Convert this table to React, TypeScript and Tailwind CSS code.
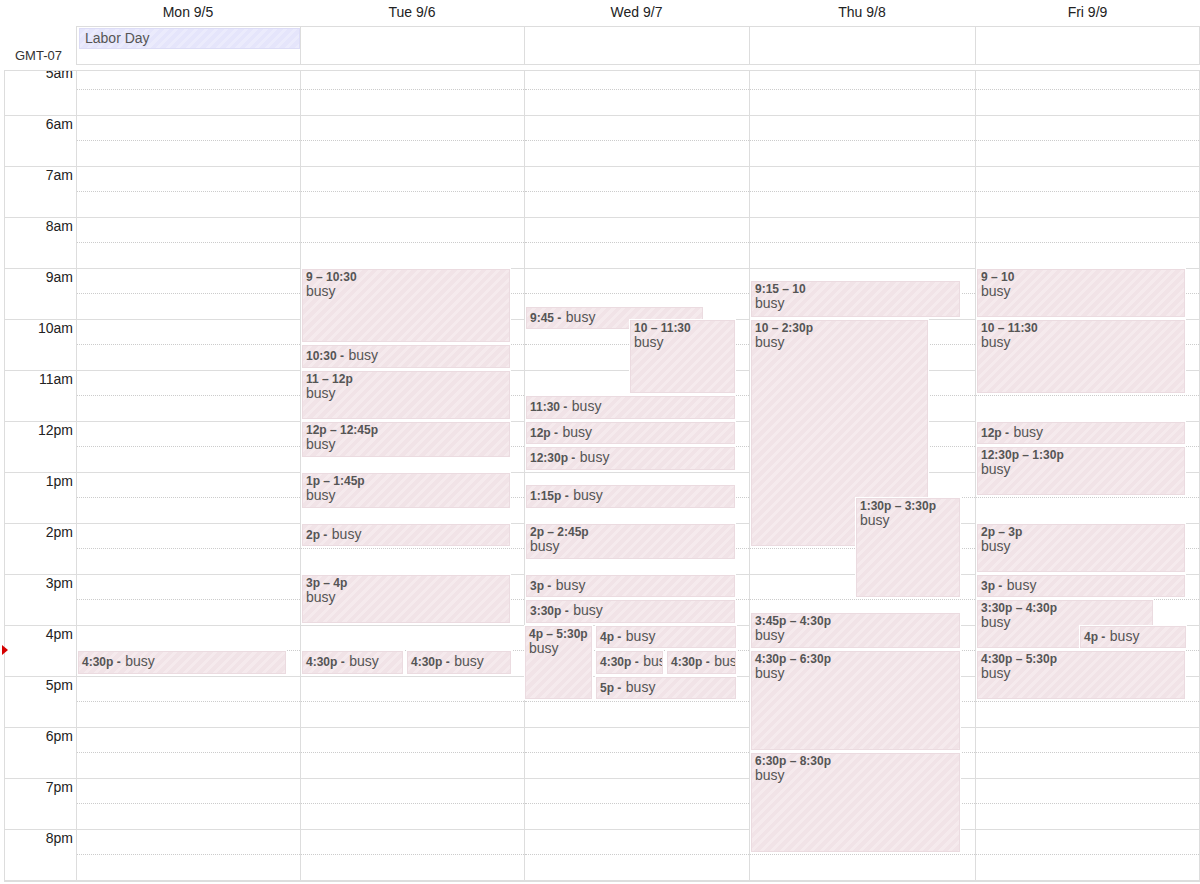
import React from "react";

type Ev = { s: number; e: number; x0: number; x1: number; time: string; inline?: boolean };

const HOUR = 51;
const FIRST = 5;
const hours = ["5am", "6am", "7am", "8am", "9am", "10am", "11am", "12pm", "1pm", "2pm", "3pm", "4pm", "5pm", "6pm", "7pm", "8pm"];

const days: { label: string; colX: number; w: string; events: Ev[] }[] = [
  {
    label: "Mon 9/5",
    colX: 76,
    w: "w-[224px]",
    events: [{ s: 16.5, e: 17, x0: 78, x1: 286, time: "4:30p", inline: true }],
  },
  {
    label: "Tue 9/6",
    colX: 300,
    w: "w-[224px]",
    events: [
      { s: 9, e: 10.5, x0: 302, x1: 510, time: "9 – 10:30" },
      { s: 10.5, e: 11, x0: 302, x1: 510, time: "10:30", inline: true },
      { s: 11, e: 12, x0: 302, x1: 510, time: "11 – 12p" },
      { s: 12, e: 12.75, x0: 302, x1: 510, time: "12p – 12:45p" },
      { s: 13, e: 13.75, x0: 302, x1: 510, time: "1p – 1:45p" },
      { s: 14, e: 14.5, x0: 302, x1: 510, time: "2p", inline: true },
      { s: 15, e: 16, x0: 302, x1: 510, time: "3p – 4p" },
      { s: 16.5, e: 17, x0: 302, x1: 403, time: "4:30p", inline: true },
      { s: 16.5, e: 17, x0: 407, x1: 511, time: "4:30p", inline: true },
    ],
  },
  {
    label: "Wed 9/7",
    colX: 524,
    w: "w-[225px]",
    events: [
      { s: 9.75, e: 10.25, x0: 526, x1: 703, time: "9:45", inline: true },
      { s: 10, e: 11.5, x0: 630, x1: 735, time: "10 – 11:30" },
      { s: 11.5, e: 12, x0: 526, x1: 735, time: "11:30", inline: true },
      { s: 12, e: 12.5, x0: 526, x1: 735, time: "12p", inline: true },
      { s: 12.5, e: 13, x0: 526, x1: 735, time: "12:30p", inline: true },
      { s: 13.25, e: 13.75, x0: 526, x1: 735, time: "1:15p", inline: true },
      { s: 14, e: 14.75, x0: 526, x1: 735, time: "2p – 2:45p" },
      { s: 15, e: 15.5, x0: 526, x1: 735, time: "3p", inline: true },
      { s: 15.5, e: 16, x0: 526, x1: 735, time: "3:30p", inline: true },
      { s: 16, e: 17.5, x0: 525, x1: 592, time: "4p – 5:30p" },
      { s: 16, e: 16.5, x0: 596, x1: 736, time: "4p", inline: true },
      { s: 16.5, e: 17, x0: 596, x1: 663, time: "4:30p", inline: true },
      { s: 16.5, e: 17, x0: 667, x1: 736, time: "4:30p", inline: true },
      { s: 17, e: 17.5, x0: 596, x1: 736, time: "5p", inline: true },
    ],
  },
  {
    label: "Thu 9/8",
    colX: 749,
    w: "w-[226px]",
    events: [
      { s: 9.25, e: 10, x0: 751, x1: 960, time: "9:15 – 10" },
      { s: 10, e: 14.5, x0: 751, x1: 928, time: "10 – 2:30p" },
      { s: 13.5, e: 15.5, x0: 856, x1: 960, time: "1:30p – 3:30p" },
      { s: 15.75, e: 16.5, x0: 751, x1: 960, time: "3:45p – 4:30p" },
      { s: 16.5, e: 18.5, x0: 751, x1: 960, time: "4:30p – 6:30p" },
      { s: 18.5, e: 20.5, x0: 751, x1: 960, time: "6:30p – 8:30p" },
    ],
  },
  {
    label: "Fri 9/9",
    colX: 975,
    w: "flex-1",
    events: [
      { s: 9, e: 10, x0: 977, x1: 1185, time: "9 – 10" },
      { s: 10, e: 11.5, x0: 977, x1: 1185, time: "10 – 11:30" },
      { s: 12, e: 12.5, x0: 977, x1: 1185, time: "12p", inline: true },
      { s: 12.5, e: 13.5, x0: 977, x1: 1185, time: "12:30p – 1:30p" },
      { s: 14, e: 15, x0: 977, x1: 1185, time: "2p – 3p" },
      { s: 15, e: 15.5, x0: 977, x1: 1185, time: "3p", inline: true },
      { s: 15.5, e: 16.5, x0: 977, x1: 1153, time: "3:30p – 4:30p" },
      { s: 16, e: 16.5, x0: 1080, x1: 1186, time: "4p", inline: true },
      { s: 16.5, e: 17.5, x0: 977, x1: 1185, time: "4:30p – 5:30p" },
    ],
  },
];

function Event({ ev, colX }: { ev: Ev; colX: number }) {
  const top = Math.floor((ev.s - FIRST) * HOUR) + 1;
  const bottom = Math.floor((ev.e - FIRST) * HOUR) - 2;
  return (
    <div
      className="absolute overflow-hidden whitespace-nowrap border border-[#ebdbe0] bg-[repeating-linear-gradient(135deg,#f1e3e7_0px,#f1e3e7_4px,#f5eaed_4px,#f5eaed_7px)] px-[3px] text-[#555] shadow-[0_0_0_1px_#fff]"
      style={{ top, height: bottom - top, left: ev.x0 - colX - 1, width: ev.x1 - ev.x0 }}
    >
      {ev.inline ? (
        <div className="leading-[17px]">
          <span className="text-[12px] font-bold">{ev.time} -</span> <span className="text-[14px]">busy</span>
        </div>
      ) : (
        <>
          <div className="text-[12px] font-bold leading-[13px] pt-[1px]">{ev.time}</div>
          <div className="text-[14px] leading-[14px]">busy</div>
        </>
      )}
    </div>
  );
}

export default function App() {
  return (
    <div className="relative h-[884px] w-[1200px] overflow-hidden bg-white font-['Liberation_Sans',Arial,sans-serif] text-[#222]">
      {/* day names */}
      <div className="flex h-[26px]">
        <div className="w-[76px] shrink-0" />
        {days.map((d) => (
          <div key={d.label} className={`${d.w} shrink-0 pt-[4px] text-center text-[14px] leading-[16px]`}>
            {d.label}
          </div>
        ))}
      </div>

      {/* all-day row */}
      <div className="flex h-[39px]">
        <div className="flex w-[76px] shrink-0 items-end pb-[1px] pl-[15px] text-[13px] leading-[16px] text-[#333]">GMT-07</div>
        <div className="flex flex-1 border-y border-r border-[#ddd]">
          {days.map((d, i) => (
            <div key={d.label} className={`${d.w} shrink-0 border-l border-[#ddd] pt-[1px]`}>
              {i === 0 && (
                <div className="ml-[2px] h-[21px] border border-[#dcdcf6] bg-[repeating-linear-gradient(135deg,#e5e5fb_0px,#e5e5fb_4px,#ebebfc_4px,#ebebfc_7px)] px-[5px] text-[14px] leading-[19px] text-[#555]">
                  Labor Day
                </div>
              )}
            </div>
          ))}
        </div>
      </div>

      {/* time grid */}
      <div className="ml-[4px] mt-[5px] w-[1196px] border-x border-t border-b-2 border-[#ddd]">
        <div className="h-[809px] overflow-hidden">
          <div className="-mt-[7px] flex">
            <div className="w-[71px] shrink-0">
              {hours.map((h) => (
                <div key={h} className="h-[51px] border-t border-[#ddd] pr-[3px] text-right text-[14px] leading-[16px] text-[#222]">
                  {h}
                </div>
              ))}
            </div>
            {days.map((d) => (
              <div key={d.label} className={`${d.w} relative shrink-0 border-l border-[#ddd]`}>
                {hours.map((h) => (
                  <div key={h} className="h-[51px] border-t border-[#ddd]">
                    <div className="h-[25px] border-b border-dotted border-[#ccc]" />
                  </div>
                ))}
                {d.events.map((ev, i) => (
                  <Event key={i} ev={ev} colX={d.colX} />
                ))}
              </div>
            ))}
          </div>
        </div>
      </div>

      {/* current time marker */}
      <div className="absolute left-[2px] top-[645px] h-0 w-0 border-y-[5px] border-l-[6px] border-y-transparent border-l-[#d50000]" />
    </div>
  );
}
